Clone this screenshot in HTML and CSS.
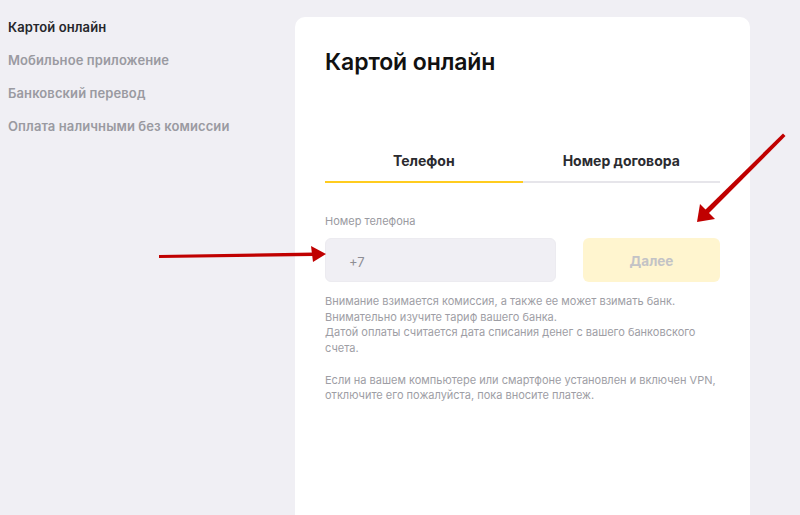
FILE: index.html
```html
<!DOCTYPE html>
<html lang="ru">
<head>
    <meta charset="UTF-8">
    <meta name="viewport" content="width=device-width, initial-scale=1.0">
    <title>Оплата</title>
    <link rel="stylesheet" href="styles.css">
</head>
<body>

    <nav class="sidebar">
        <a href="#" class="side-link active">Картой онлайн</a>
        <a href="#" class="side-link">Мобильное приложение</a>
        <a href="#" class="side-link">Банковский перевод</a>
        <a href="#" class="side-link">Оплата наличными без комиссии</a>
    </nav>

    <main class="card">
        <h1 class="card-title">Картой онлайн</h1>

        <div class="tabs">
            <div class="tab active">Телефон</div>
            <div class="tab">Номер договора</div>
        </div>

        <label class="field-label" for="phone">Номер телефона</label>
        <div class="form-row">
            <input type="text" id="phone" class="phone-input" placeholder="+7">
            <button class="next-btn" disabled>Далее</button>
        </div>

        <p class="note">
            Внимание взимается комиссия, а также ее может взимать банк.<br>
            Внимательно изучите тариф вашего банка.<br>
            Датой оплаты считается дата списания денег с вашего банковского счета.
        </p>
        <p class="note">
            Если на вашем компьютере или смартфоне установлен и включен VPN, отключите его пожалуйста, пока вносите платеж.
        </p>
    </main>

    <!-- стрелки поверх скриншота -->
    <svg class="arrows" width="800" height="515" viewBox="0 0 800 515">
        <polygon points="159,255 314,252.5 314,256 159,258" fill="#c00000"/>
        <polygon points="311,246 326,254 313,262" fill="#c00000"/>
        <polygon points="783,133.5 785.5,136 708,214 704.5,210.5" fill="#c00000"/>
        <polygon points="697,222 700,204 715,219" fill="#c00000"/>
    </svg>

</body>
</html>
```

FILE: styles.css
```css
/* Общий фон */
body {
    font-family: Inter, "Noto Sans", sans-serif;
    background-color: #f0eff4;
    margin: 0;
    padding: 0;
    display: flex;
    align-items: flex-start;
    height: 515px;
    overflow: hidden;
}

/* Боковое меню */
.sidebar {
    width: 287px;
    padding: 18px 0 0 8px;
    display: flex;
    flex-direction: column;
    gap: 15px;
}
.side-link {
    font-size: 13px;
    font-weight: 600;
    line-height: 18px;
    color: #9a9aa1;
    text-decoration: none;
    white-space: nowrap;
    letter-spacing: 0.1px;
}
.side-link.active {
    color: #26262b;
}

/* Карточка */
.card {
    margin-top: 17px;
    width: 395px;
    min-height: 520px;
    padding: 30px 30px 0;
    background-color: #ffffff;
    border-radius: 10px;
}
.card-title {
    margin: 0;
    font-size: 23px;
    font-weight: 600;
    line-height: 30px;
    color: #111;
    letter-spacing: -0.1px;
}

/* Вкладки */
.tabs {
    display: flex;
    margin-top: 74px;
}
.tab {
    flex: 1;
    text-align: center;
    font-size: 14px;
    font-weight: 700;
    line-height: 20px;
    color: #2b2b30;
    padding-bottom: 10px;
    border-bottom: 2px solid #e6e5ea;
}
.tab.active {
    border-bottom-color: #ffcc1f;
}

/* Форма */
.field-label {
    display: block;
    margin-top: 31px;
    font-size: 11px;
    line-height: 14px;
    color: #9a9aa1;
}
.form-row {
    display: flex;
    justify-content: space-between;
    margin-top: 10px;
}
.phone-input {
    box-sizing: border-box;
    width: 231px;
    height: 44px;
    padding: 3px 0 0 23px;
    border: 1px solid #ecebf0;
    border-radius: 6px;
    background-color: #f0eff4;
    font-family: inherit;
    font-size: 13px;
    color: #333;
}
.phone-input::placeholder {
    color: #8e8e95;
}
.next-btn {
    width: 137px;
    height: 44px;
    padding-top: 3px;
    border: none;
    border-radius: 6px;
    background-color: #fff5cf;
    color: #c3c3c6;
    font-family: inherit;
    font-size: 13.5px;
    font-weight: 700;
}

/* Примечания */
.note {
    margin: 12px 0 0;
    font-size: 11px;
    line-height: 15.7px;
    color: #9e9ea5;
}
.note + .note {
    margin-top: 15.7px;
}

/* Стрелки */
.arrows {
    position: absolute;
    left: 0;
    top: 0;
    pointer-events: none;
}
```
